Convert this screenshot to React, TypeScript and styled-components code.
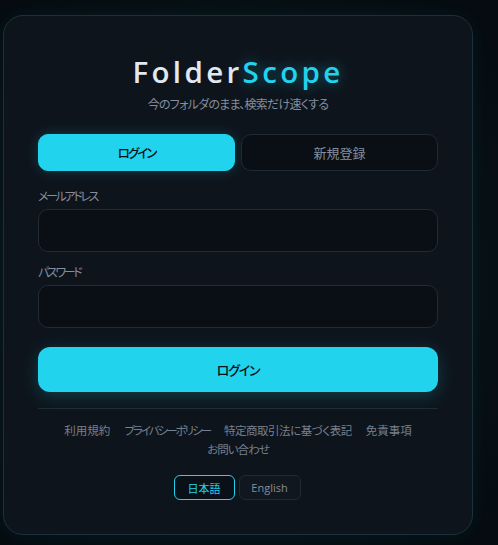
import React from "react";
import styled, { createGlobalStyle } from "styled-components";

const FONT = `"Open Sans", "Noto Sans CJK JP", sans-serif`;

const Global = createGlobalStyle`
  html, body { margin: 0; padding: 0; height: 100%; background: #04090d; }
  * { box-sizing: border-box; }
  body { font-family: ${FONT}; overflow: hidden; font-feature-settings: "palt"; }
  button { font-feature-settings: "palt"; }
`;

const Page = styled.div`
  width: 498px;
  height: 545px;
  padding: 15px 25px 10px 3px;
  background:
    radial-gradient(ellipse 420px 420px at 230px 280px, rgba(24, 60, 72, 0.35), transparent 100%),
    linear-gradient(90deg, #04090d 0%, #04090d 100%);
`;

const Card = styled.main`
  width: 470px;
  height: 520px;
  padding: 35px 34px 0;
  border: 1px solid #1c3039;
  border-radius: 20px;
  background: #0e141c;
  box-shadow: 0 0 18px rgba(34, 211, 238, 0.06);
  display: flex;
  flex-direction: column;
`;

const Title = styled.h1`
  margin: 0;
  height: 42px;
  font-size: 29.5px;
  line-height: 42px;
  font-weight: 600;
  letter-spacing: 3.35px;
  text-align: center;
  color: #e2e8f0;
`;

const Accent = styled.span`
  color: #22d3ee;
  text-shadow: 0 0 14px rgba(34, 211, 238, 0.45);
`;

const Subtitle = styled.p`
  margin: 2px 0 0;
  height: 20px;
  font-size: 12px;
  line-height: 20px;
  letter-spacing: -0.75px;
  text-align: center;
  color: #848e9c;
`;

const Tabs = styled.div`
  display: flex;
  gap: 6px;
  margin-top: 19px;
`;

const Tab = styled.button<{ $active?: boolean }>`
  flex: 1;
  height: 37px;
  border-radius: 10px;
  border: 1px solid ${(p) => (p.$active ? "#22d3ee" : "#1e2a34")};
  background: ${(p) => (p.$active ? "#22d3ee" : "#0a0f16")};
  color: ${(p) => (p.$active ? "#06121a" : "#848e9c")};
  box-shadow: ${(p) => (p.$active ? "0 0 14px rgba(34, 211, 238, 0.2)" : "none")};
  font-family: ${FONT};
  font-size: ${(p) => (p.$active ? "12.5px" : "13px")};
  font-weight: ${(p) => (p.$active ? 500 : 400)};
  letter-spacing: ${(p) => (p.$active ? "-2px" : "0")};
  padding: 0;
`;

const Field = styled.div<{ $first?: boolean }>`
  display: flex;
  flex-direction: column;
  margin-top: ${(p) => (p.$first ? "16px" : "11px")};
`;

const Label = styled.label`
  height: 22px;
  font-size: 12px;
  line-height: 20px;
  letter-spacing: -2.35px;
  color: #848e9c;
`;

const Input = styled.input`
  height: 43px;
  width: 100%;
  border: 1px solid #1f2b35;
  border-radius: 10px;
  background: #0a0f16;
  outline: none;
`;

const Submit = styled.button`
  height: 45px;
  margin-top: 19px;
  border: none;
  border-radius: 12px;
  background: #22d3ee;
  color: #06121a;
  font-family: ${FONT};
  font-size: 13px;
  font-weight: 500;
  letter-spacing: -1.2px;
  box-shadow: 0 4px 18px rgba(34, 211, 238, 0.22);
  padding: 0;
`;

const Divider = styled.hr`
  width: 100%;
  margin: 16px 0 0;
  border: none;
  border-top: 1px solid #1f2b35;
`;

const Links = styled.nav`
  display: flex;
  flex-wrap: wrap;
  justify-content: center;
  column-gap: 14px;
  margin-top: 12px;
`;

const FootLink = styled.a<{ $spacing?: number }>`
  font-size: 11.5px;
  line-height: 19px;
  letter-spacing: ${(p) => p.$spacing ?? 0}px;
  color: #76808d;
`;

const Langs = styled.div`
  display: flex;
  justify-content: center;
  gap: 4px;
  margin-top: 16px;
  transform: translateX(-1px);
`;

const Lang = styled.button<{ $active?: boolean }>`
  height: 25px;
  width: ${(p) => (p.$active ? "61px" : "62px")};
  padding: 0;
  border-radius: 6px;
  border: 1px solid ${(p) => (p.$active ? "#22d3ee" : "#1e2a34")};
  background: ${(p) => (p.$active ? "#0a1018" : "#11171f")};
  color: ${(p) => (p.$active ? "#22d3ee" : "#848e9c")};
  font-family: ${FONT};
  font-size: 11px;
`;

export default function App() {
  return (
    <>
      <Global />
      <Page>
        <Card>
          <Title>
            Folder<Accent>Scope</Accent>
          </Title>
          <Subtitle>今のフォルダのまま、検索だけ速くする</Subtitle>
          <Tabs>
            <Tab $active>ログイン</Tab>
            <Tab>新規登録</Tab>
          </Tabs>
          <Field $first>
            <Label>メールアドレス</Label>
            <Input type="email" />
          </Field>
          <Field>
            <Label>パスワード</Label>
            <Input type="password" />
          </Field>
          <Submit>ログイン</Submit>
          <Divider />
          <Links>
            <FootLink>利用規約</FootLink>
            <FootLink $spacing={-2}>プライバシーポリシー</FootLink>
            <FootLink $spacing={-0.5}>特定商取引法に基づく表記</FootLink>
            <FootLink>免責事項</FootLink>
            <FootLink $spacing={-1}>お問い合わせ</FootLink>
          </Links>
          <Langs>
            <Lang $active>日本語</Lang>
            <Lang>English</Lang>
          </Langs>
        </Card>
      </Page>
    </>
  );
}
